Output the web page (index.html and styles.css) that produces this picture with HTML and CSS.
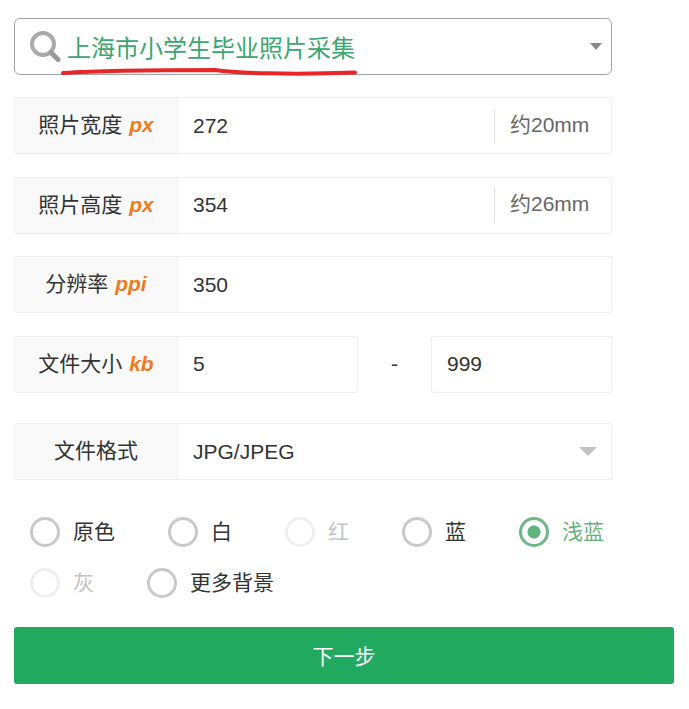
FILE: index.html
```html
<!DOCTYPE html>
<html lang="zh-CN">
  <head>
    <meta charset="UTF-8" />
    <meta name="viewport" content="width=device-width, initial-scale=1.0" />
    <title>照片采集</title>
    <link rel="stylesheet" href="styles.css">
  </head>
  <body>
    <div class="form-container">
      <div class="search-select">
        <svg class="search-icon" width="31" height="31" viewBox="0 0 31 31">
          <circle cx="13" cy="13" r="11" fill="none" stroke="#aaa" stroke-width="4" />
          <path d="M21 21.500 L28 28.500" fill="none" stroke="#999" stroke-width="5" stroke-linecap="round" />
        </svg>
        <span class="search-text">上海市小学生毕业照片采集</span>
        <span class="arrow arrow-dark"></span>
        <svg class="red-line" width="300" height="10" viewBox="0 0 300 10">
          <path d="M2 6 C39 3.500 89 3 154 3 C174 6 229 8 294 5.500" fill="none" stroke="#e8262a" stroke-width="4" stroke-linecap="round" />
        </svg>
      </div>

      <div class="field">
        <div class="field-label">照片宽度 <em>px</em></div>
        <div class="field-value">272</div>
        <div class="field-note">约20mm</div>
      </div>

      <div class="field">
        <div class="field-label">照片高度 <em>px</em></div>
        <div class="field-value">354</div>
        <div class="field-note">约26mm</div>
      </div>

      <div class="field">
        <div class="field-label">分辨率 <em>ppi</em></div>
        <div class="field-value">350</div>
      </div>

      <div class="size-row">
        <div class="field">
          <div class="field-label">文件大小 <em>kb</em></div>
          <div class="field-value">5</div>
        </div>
        <div class="size-dash">-</div>
        <div class="field size-max">
          <div class="field-value">999</div>
        </div>
      </div>

      <div class="field format-field">
        <div class="field-label">文件格式</div>
        <div class="field-value">JPG/JPEG</div>
        <span class="arrow arrow-light"></span>
      </div>

      <div class="colors">
        <div class="color-item"><span class="radio"></span>原色</div>
        <div class="color-item"><span class="radio"></span>白</div>
        <div class="color-item disabled"><span class="radio"></span>红</div>
        <div class="color-item"><span class="radio"></span>蓝</div>
        <div class="color-item checked"><span class="radio"></span>浅蓝</div>
        <div class="color-item disabled"><span class="radio"></span>灰</div>
        <div class="color-item"><span class="radio"></span>更多背景</div>
      </div>

      <button class="next-btn">下一步</button>
    </div>
  </body>
</html>
```

FILE: styles.css
```css
body {
  font-family: "Liberation Sans", "Noto Sans CJK SC", sans-serif;
  font-size: 21px;
  line-height: 1.2;
  background-color: #fff;
  color: #333;
  margin: 0;
  padding: 0;
}

.form-container {
  width: 660px;
  padding: 18px 0 0 14px;
}

.search-select {
  position: relative;
  display: flex;
  align-items: center;
  box-sizing: border-box;
  width: 598px;
  height: 57px;
  margin-bottom: 22px;
  padding-left: 15px;
  border: 1px solid #a3a3a3;
  border-radius: 6px;
}

.search-icon {
  margin-right: 6px;
}

.search-text {
  padding-top: 5px;
  font-size: 24px;
  color: #3aa76d;
}

.arrow {
  position: absolute;
  width: 0;
  height: 0;
  border-style: solid;
  border-color: transparent;
}

.arrow-dark {
  right: 9px;
  top: 24px;
  border-width: 7px 6px 0;
  border-top-color: #8a8a8a;
}

.arrow-light {
  right: 14px;
  top: 23px;
  border-width: 9px 9px 0;
  border-top-color: #c2c2c2;
}

.red-line {
  position: absolute;
  left: 46px;
  top: 48px;
}

.field {
  position: relative;
  display: flex;
  align-items: center;
  box-sizing: border-box;
  width: 598px;
  height: 57px;
  margin-bottom: 22.5px;
  border: 1px solid #eee;
  border-radius: 3px;
}

.field-label {
  box-sizing: border-box;
  flex: none;
  width: 163px;
  height: 100%;
  background-color: #f9f9f9;
  border-right: 1px solid #eee;
  line-height: 53px;
  text-align: center;
}

.field-label em {
  margin-left: 1px;
  font-weight: bold;
  color: #f07a21;
}

.field-value {
  flex: 1;
  padding-left: 15px;
}

.field-note {
  flex: none;
  box-sizing: border-box;
  width: 117px;
  height: 36px;
  padding-left: 15px;
  border-left: 1px solid #e2e2e2;
  color: #666;
  line-height: 34px;
  white-space: nowrap;
}

.size-row {
  display: flex;
  align-items: center;
  width: 598px;
  margin-bottom: 30.5px;
}

.size-row .field {
  width: 344px;
  margin-bottom: 0;
}

.size-row .size-max {
  width: 181px;
}

.size-dash {
  width: 73px;
  text-align: center;
}

.format-field {
  margin-bottom: 37px;
}

.colors {
  display: flex;
  flex-wrap: wrap;
  gap: 21px 53px;
  padding-left: 16px;
  margin-bottom: 29px;
}

.color-item {
  display: flex;
  align-items: center;
  gap: 13px;
  height: 30px;
}

.radio {
  box-sizing: border-box;
  width: 30px;
  height: 30px;
  border: 3px solid #c9c9c9;
  border-radius: 50%;
}

.disabled {
  color: #c4c4c4;
}

.disabled .radio {
  border-color: #efefef;
}

.checked {
  color: #66b27f;
}

.checked .radio {
  border-color: #70b788;
  background: radial-gradient(circle, #5fb47c 0 6px, #fff 7px);
}

.next-btn {
  display: block;
  width: 660px;
  height: 57px;
  padding: 0 0 2px;
  border: none;
  border-radius: 3px;
  background-color: #22a960;
  color: #fff;
  font-family: inherit;
  font-size: 21px;
}
```
